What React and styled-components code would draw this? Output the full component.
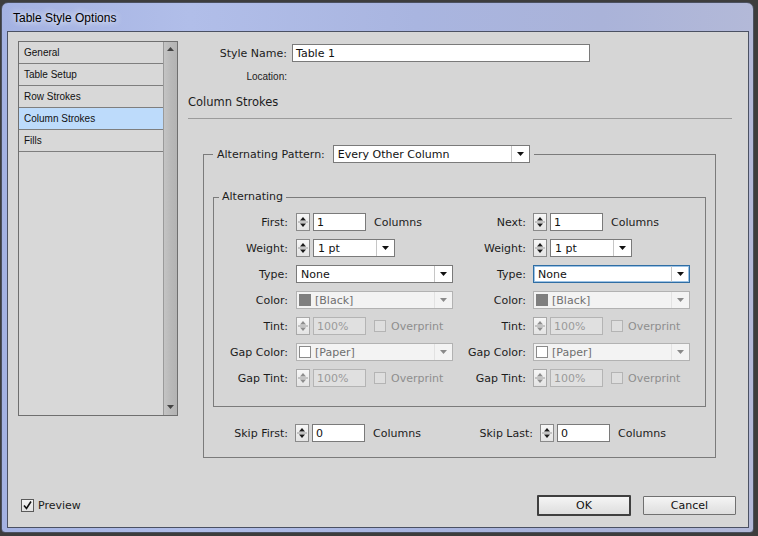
import React from 'react';
import styled, { createGlobalStyle } from 'styled-components';

const GlobalStyle = createGlobalStyle`
    html, body {
        margin: 0;
        padding: 0;
    }
    body {
        width: 758px;
        height: 536px;
        overflow: hidden;
        background: #3d3d3d;
        font-family: "DejaVu Sans", Tahoma, sans-serif;
        font-size: 11px;
        color: #1c1c1c;
    }
    * {
        box-sizing: border-box;
    }
`;

function Spinner({ disabled }) {
    return (
        <SpinBox $disabled={disabled}>
            <svg width="12" height="16" viewBox="0 0 12 16">
                <path d="M3 6.5h6L6 3z" />
                <line x1="1" y1="8" x2="11" y2="8" />
                <path d="M3 9.5h6L6 13z" />
            </svg>
        </SpinBox>
    );
}

function Select({ width, muted, focused, swatch, children }) {
    return (
        <SelectBox $width={width} $muted={muted} $focused={focused}>
            {swatch && <Swatch $color={swatch} />}
            <SelectText>{children}</SelectText>
            <ArrowCell $muted={muted}>
                <svg width="7" height="4" viewBox="0 0 7 4">
                    <path d="M0 0h7L3.5 4z" />
                </svg>
            </ArrowCell>
        </SelectBox>
    );
}

function NumberField({ value, disabled }) {
    return (
        <Controls>
            <Spinner disabled={disabled} />
            <TextInput $width={53} $disabled={disabled}>{value}</TextInput>
        </Controls>
    );
}

function StrokeColumn({ count, countLabel, gap, typeFocused }) {
    return (
        <FormGrid $gap={gap}>
            <Label>{countLabel}</Label>
            <Controls>
                <NumberField value={count} />
                <Unit>Columns</Unit>
            </Controls>

            <Label>Weight:</Label>
            <Controls>
                <Spinner />
                <Select width={82}>1 pt</Select>
            </Controls>

            <Label>Type:</Label>
            <Select width={157} focused={typeFocused}>None</Select>

            <Label>Color:</Label>
            <Select width={157} muted swatch="#7f7f7f">[Black]</Select>

            <Label>Tint:</Label>
            <Controls>
                <NumberField value="100%" disabled />
                <Overprint><Box />Overprint</Overprint>
            </Controls>

            <Label>Gap Color:</Label>
            <Select width={157} muted swatch="#ffffff">[Paper]</Select>

            <Label>Gap Tint:</Label>
            <Controls>
                <NumberField value="100%" disabled />
                <Overprint><Box />Overprint</Overprint>
            </Controls>
        </FormGrid>
    );
}

function App() {
    const pages = ['General', 'Table Setup', 'Row Strokes', 'Column Strokes', 'Fills'];

    return (
        <>
            <GlobalStyle />
            <Window>
                <TitleBar>Table Style Options</TitleBar>
                <Client>
                    <Body>
                        <PageList>
                            <PageItems>
                                {pages.map((p) => (
                                    <PageItem key={p} $selected={p === 'Column Strokes'}>{p}</PageItem>
                                ))}
                            </PageItems>
                            <ScrollBar>
                                <svg width="7" height="4" viewBox="0 0 7 4"><path d="M0 4h7L3.5 0z" /></svg>
                                <svg width="7" height="4" viewBox="0 0 7 4"><path d="M0 0h7L3.5 4z" /></svg>
                            </ScrollBar>
                        </PageList>

                        <Main>
                            <NameRow>
                                <Label $width={99}>Style Name:</Label>
                                <TextInput $width={298}>Table 1</TextInput>
                            </NameRow>
                            <LocationRow>Location:</LocationRow>
                            <SectionTitle>Column Strokes</SectionTitle>
                            <Rule />

                            <OuterGroup>
                                <Legend>
                                    <Controls $gap={8}>
                                        Alternating Pattern:
                                        <Select width={197}>Every Other Column</Select>
                                    </Controls>
                                </Legend>

                                <InnerGroup>
                                    <SmallLegend>Alternating</SmallLegend>
                                    <Columns>
                                        <StrokeColumn countLabel="First:" count="1" gap={8} />
                                        <StrokeColumn countLabel="Next:" count="1" gap={7} typeFocused />
                                    </Columns>
                                </InnerGroup>

                                <SkipRow>
                                    <SkipCell>
                                        <Label>Skip First:</Label>
                                        <Controls>
                                            <NumberField value="0" />
                                            <Unit>Columns</Unit>
                                        </Controls>
                                    </SkipCell>
                                    <SkipCell>
                                        <Label>Skip Last:</Label>
                                        <Controls>
                                            <NumberField value="0" />
                                            <Unit>Columns</Unit>
                                        </Controls>
                                    </SkipCell>
                                </SkipRow>
                            </OuterGroup>
                        </Main>
                    </Body>

                    <Footer>
                        <Preview>
                            <CheckBox>
                                <svg width="11" height="11" viewBox="0 0 11 11">
                                    <path d="M2 5.5l2.5 3L9 1.5" />
                                </svg>
                            </CheckBox>
                            Preview
                        </Preview>
                        <Buttons>
                            <Button $default>OK</Button>
                            <Button>Cancel</Button>
                        </Buttons>
                    </Footer>
                </Client>
            </Window>
        </>
    );
}

export default App;

const Window = styled.div`
    margin: 2px 0 0 1px;
    width: 753px;
    height: 531px;
    padding: 0 4px 4px 5px;
    border: 1px solid #4b505f;
    border-radius: 7px 7px 4px 4px;
    background: linear-gradient(90deg, #a4b2e2 0%, #b1bee9 25%, #a9b5e0 55%, #aab3d9 80%, #b3b9d8 100%);
    display: flex;
    flex-direction: column;
`;

const TitleBar = styled.div`
    height: 28px;
    line-height: 28px;
    padding: 1px 0 0 6px;
    font-family: "Liberation Sans", Arial, sans-serif;
    font-size: 12px;
    color: #000;
    text-shadow: 0 0 6px rgba(255, 255, 255, 0.9), 0 0 10px rgba(255, 255, 255, 0.6);
`;

const Client = styled.div`
    flex: 1;
    display: flex;
    flex-direction: column;
    justify-content: space-between;
    padding: 9px 12px 11px 10px;
    border: 1px solid #4b5163;
    background: #d6d6d6;
`;

const Body = styled.div`
    display: flex;
    gap: 10px;
`;

const PageList = styled.div`
    width: 160px;
    height: 375px;
    display: flex;
    border: 1px solid #6f6f6f;
    background: #d8d8d8;
`;

const PageItems = styled.div`
    flex: 1;
`;

const PageItem = styled.div`
    height: 22px;
    line-height: 22px;
    padding-left: 5px;
    border-bottom: 1px solid #7e7e7e;
    font-family: "Liberation Sans", Arial, sans-serif;
    font-size: 10px;
    color: #111;
    background: ${({ $selected }) => ($selected ? '#bddbfb' : 'transparent')};
`;

const ScrollBar = styled.div`
    width: 14px;
    display: flex;
    flex-direction: column;
    justify-content: space-between;
    align-items: center;
    padding: 5px 0 6px;
    border-left: 1px solid #9a9a9a;
    background: linear-gradient(90deg, #c4c4c4, #b9b9b9 50%, #b3b3b3);

    svg path {
        fill: #444;
    }
`;

const Main = styled.div`
    flex: 1;
    padding-right: 4px;
`;

const NameRow = styled.div`
    margin-top: 3px;
    display: flex;
    align-items: center;
    gap: 5px;
`;

const Label = styled.span`
    width: ${({ $width }) => ($width ? `${$width}px` : 'auto')};
    text-align: right;
    white-space: nowrap;
`;

const LocationRow = styled.div`
    margin-top: 9px;
    width: 99px;
    text-align: right;
    line-height: 12px;
    font-family: "Liberation Sans", Arial, sans-serif;
    font-size: 10px;
`;

const SectionTitle = styled.div`
    margin-top: 12px;
    line-height: 14px;
    font-size: 11.5px;
`;

const Rule = styled.div`
    margin-top: 9px;
    height: 1px;
    background: #9b9b9b;
`;

const OuterGroup = styled.fieldset`
    margin: 26px 0 0 15px;
    width: 513px;
    padding: 0 9px 15px;
    border: 1px solid #7b7b7b;
    min-width: 0;
`;

const Legend = styled.legend`
    padding: 0 4px;
`;

const InnerGroup = styled.fieldset`
    margin: 27px 0 0;
    padding: 9px 0 19px;
    border: 1px solid #7b7b7b;
    min-width: 0;
`;

const SmallLegend = styled.legend`
    margin-left: 5px;
    padding: 0 3px;
    line-height: 14px;
`;

const Columns = styled.div`
    display: grid;
    grid-template-columns: 238px 1fr;
`;

const FormGrid = styled.div`
    display: grid;
    grid-template-columns: 74px auto;
    grid-auto-rows: 18px;
    column-gap: ${({ $gap }) => $gap}px;
    row-gap: 8px;
    align-items: center;
    justify-items: start;

    & > ${Label} {
        justify-self: end;
    }
`;

const Controls = styled.div`
    display: flex;
    align-items: center;
    gap: ${({ $gap }) => ($gap ? `${$gap}px` : '3px')};
    white-space: nowrap;
`;

const Unit = styled.span`
    margin-left: 5px;
`;

const SpinBox = styled.span`
    width: 14px;
    height: 18px;
    display: flex;
    align-items: center;
    justify-content: center;
    border: 1px solid ${({ $disabled }) => ($disabled ? '#a9a9a9' : '#8a8a8a')};
    background: linear-gradient(#f7f7f7, #e4e4e4);

    path {
        fill: ${({ $disabled }) => ($disabled ? '#8e8e8e' : '#1a1a1a')};
    }
    line {
        stroke: #9a9a9a;
        stroke-width: 1;
    }
`;

const TextInput = styled.span`
    width: ${({ $width }) => $width}px;
    height: 18px;
    line-height: 17px;
    padding-left: 3px;
    border: 1px solid ${({ $disabled }) => ($disabled ? '#b4b4b4' : '#7a7a7a')};
    background: ${({ $disabled }) => ($disabled ? '#e0e0e0' : '#ffffff')};
    color: ${({ $disabled }) => ($disabled ? '#9a9a9a' : '#111')};
`;

const SelectBox = styled.span`
    width: ${({ $width }) => $width}px;
    height: 18px;
    display: flex;
    align-items: stretch;
    border: 1px solid ${({ $muted, $focused }) => ($focused ? '#2f6da3' : $muted ? '#b2b2b2' : '#7a7a7a')};
    box-shadow: ${({ $focused }) => ($focused ? 'inset 0 0 0 1px #9cc3e6' : 'none')};
    background: ${({ $muted }) => ($muted ? '#f3f3f3' : '#ffffff')};
    color: ${({ $muted }) => ($muted ? '#6f6f6f' : '#111')};
`;

const Swatch = styled.span`
    width: 12px;
    height: 12px;
    margin: 2px 0 0 2px;
    border: 1px solid ${({ $color }) => ($color === '#ffffff' ? '#8a8a8a' : '#7f7f7f')};
    background: ${({ $color }) => $color};
`;

const SelectText = styled.span`
    flex: 1;
    padding-left: 4px;
    line-height: 17px;
    white-space: nowrap;
`;

const ArrowCell = styled.span`
    width: 18px;
    display: flex;
    align-items: center;
    justify-content: center;
    border-left: 1px solid ${({ $muted }) => ($muted ? '#e2e2e2' : '#c6c6c6')};

    path {
        fill: ${({ $muted }) => ($muted ? '#8a8a8a' : '#111')};
    }
`;

const Overprint = styled.span`
    margin-left: 5px;
    display: flex;
    align-items: center;
    gap: 5px;
    color: #8e8e8e;
`;

const Box = styled.span`
    width: 12px;
    height: 12px;
    border: 1px solid #b4b4b4;
    background: #dedede;
`;

const SkipRow = styled.div`
    margin-top: 17px;
    display: grid;
    grid-template-columns: 245px 1fr;
    padding-left: 1px;
`;

const SkipCell = styled.div`
    display: grid;
    grid-template-columns: 74px auto;
    column-gap: 7px;
    align-items: center;
    justify-items: start;

    & > ${Label} {
        justify-self: end;
    }
`;

const Footer = styled.div`
    display: flex;
    align-items: center;
    justify-content: space-between;
`;

const Preview = styled.label`
    margin-left: 3px;
    display: flex;
    align-items: center;
    gap: 4px;
`;

const CheckBox = styled.span`
    width: 13px;
    height: 13px;
    display: flex;
    align-items: center;
    justify-content: center;
    border: 1px solid #5a5a5a;
    background: linear-gradient(#f4f4f4, #e2e2e2);

    path {
        fill: none;
        stroke: #111;
        stroke-width: 1.6;
    }
`;

const Buttons = styled.div`
    display: flex;
    align-items: center;
    gap: 12px;
`;

const Button = styled.button`
    width: ${({ $default }) => ($default ? '94px' : '93px')};
    height: ${({ $default }) => ($default ? '21px' : '19px')};
    padding: 0;
    border: ${({ $default }) => ($default ? '2px solid #3f3f3f' : '1px solid #707070')};
    border-radius: 1px;
    background: linear-gradient(#f5f5f5, #e9e9e9 50%, #dedede);
    font-family: "DejaVu Sans", Tahoma, sans-serif;
    font-size: 11px;
    color: #111;
`;
